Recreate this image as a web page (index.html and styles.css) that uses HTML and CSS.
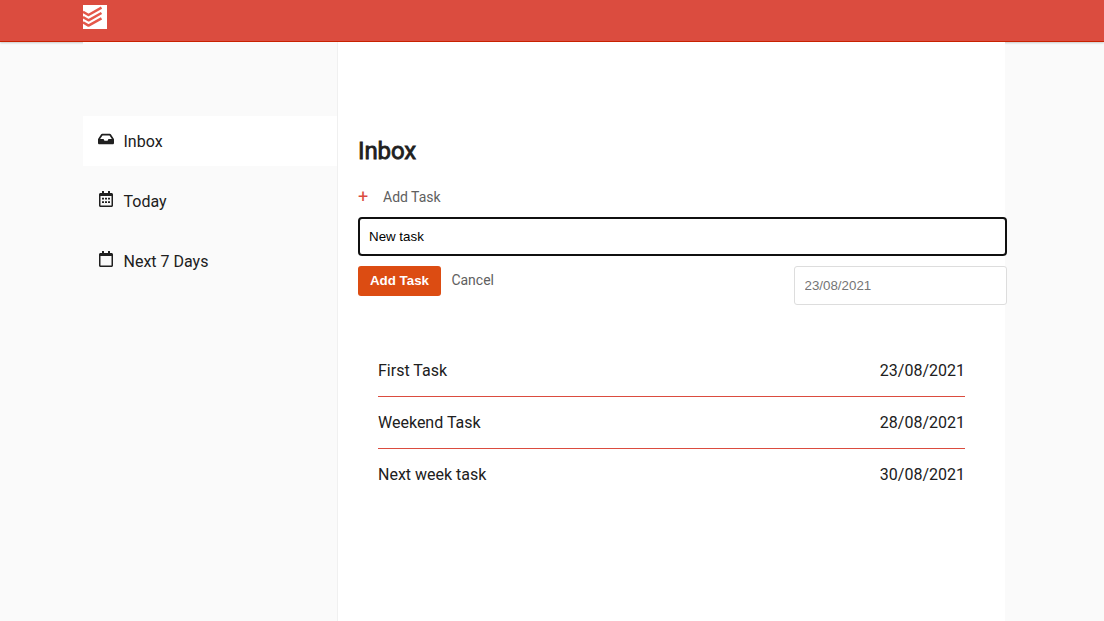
FILE: index.html
```html
<!DOCTYPE html>
<html lang="en">
<head>
<meta charset="utf-8">
<title>Inbox</title>
<link rel="stylesheet" href="styles.css">
</head>
<body>
<header class="header">
  <svg class="logo" viewBox="0 0 24 24" role="img" aria-label="Logo">
    <rect width="24" height="24" fill="#fff"/>
    <g fill="none" stroke="#e4584a" stroke-width="2.5" stroke-linejoin="round">
      <path d="M0 6.700 5.500 10 18.500 2.700"/>
      <path d="M0 12 5.500 15.300 18.500 8"/>
      <path d="M0 17.300 5.500 20.600 18.500 13.300"/>
    </g>
  </svg>
</header>
<div class="layout">
  <nav class="sidebar">
    <a class="nav-item active">
      <svg class="icon" viewBox="0 0 576 512"><path d="M567.938 243.908L462.25 85.374A48.003 48.003 0 0 0 422.311 64H153.689a48 48 0 0 0-39.938 21.374L8.062 243.908A47.994 47.994 0 0 0 0 270.533V400c0 26.510 21.490 48 48 48h480c26.510 0 48-21.490 48-48V270.533a47.994 47.994 0 0 0-8.062-26.625zM162.252 128h251.497l85.333 128H376l-32 64H232l-32-64H76.918l85.334-128z"/></svg>
      <span class="nav-label">Inbox</span>
    </a>
    <a class="nav-item">
      <svg class="icon" viewBox="0 0 448 512"><path d="M400 64h-48V12c0-6.600-5.400-12-12-12h-40c-6.600 0-12 5.400-12 12v52H160V12c0-6.600-5.400-12-12-12h-40c-6.600 0-12 5.400-12 12v52H48C21.500 64 0 85.500 0 112v352c0 26.500 21.500 48 48 48h352c26.500 0 48-21.500 48-48V112c0-26.500-21.500-48-48-48zm-6 400H54c-3.300 0-6-2.700-6-6V160h352v298c0 3.300-2.700 6-6 6z"/><path d="M96 212h64v56H96zm96 0h64v56h-64zm96 0h64v56h-64zM96 324h64v56H96zm96 0h64v56h-64zm96 0h64v56h-64z"/></svg>
      <span class="nav-label">Today</span>
    </a>
    <a class="nav-item">
      <svg class="icon" viewBox="0 0 448 512"><path d="M400 64h-48V12c0-6.600-5.400-12-12-12h-40c-6.600 0-12 5.400-12 12v52H160V12c0-6.600-5.400-12-12-12h-40c-6.600 0-12 5.400-12 12v52H48C21.500 64 0 85.500 0 112v352c0 26.500 21.500 48 48 48h352c26.500 0 48-21.500 48-48V112c0-26.500-21.500-48-48-48zm-6 400H54c-3.300 0-6-2.700-6-6V160h352v298c0 3.300-2.700 6-6 6z"/></svg>
      <span class="nav-label">Next 7 Days</span>
    </a>
  </nav>
  <main class="content">
    <h1 class="title">Inbox</h1>
    <div class="add-link"><span class="plus">+</span><span>Add Task</span></div>
    <input class="task-input" type="text" value="New task" aria-label="Task">
    <div class="actions">
      <button class="submit" type="button">Add Task</button>
      <span class="cancel">Cancel</span>
      <input class="date-input" type="text" placeholder="23/08/2021" aria-label="Date">
    </div>
    <ul class="tasks">
      <li class="task"><span>First Task</span><span>23/08/2021</span></li>
      <li class="task"><span>Weekend Task</span><span>28/08/2021</span></li>
      <li class="task"><span>Next week task</span><span>30/08/2021</span></li>
    </ul>
  </main>
</div>
</body>
</html>
```

FILE: styles.css
```css
* { box-sizing: border-box; }
body {
  margin: 0;
  height: 100vh;
  overflow: hidden;
  background: #fafafa;
  color: #202020;
  font: 16px/20px Roboto, sans-serif;
}
.header {
  height: 42px;
  padding: 5px 83px;
  background: #db4c3f;
  border-bottom: 1px solid #c82100;
  box-shadow: 0 1px 2px rgba(0, 0, 0, .2);
}
.logo { display: block; width: 24px; height: 24px; }
.layout {
  position: relative;
  display: flex;
  width: 922px;
  height: 579px;
  margin-left: 83px;
}
.sidebar {
  width: 255px;
  padding-top: 74px;
  background: #fafafa;
  border-right: 1px solid #f0f0f0;
}
.nav-item {
  display: flex;
  align-items: center;
  gap: 9.5px;
  height: 50px;
  margin-bottom: 10px;
  padding-left: 15px;
}
.nav-label { padding-top: 2px; }
.active { background: #fff; }
.icon { width: 16px; height: 16px; margin-top: -4px; fill: #202020; }
.content {
  width: 667px;
  padding: 95px 0 0 20px;
  background: #fff;
}
.title {
  margin: 0;
  font-size: 24px;
  font-weight: 400;
  line-height: 28px;
  letter-spacing: -.1px;
  -webkit-text-stroke: .8px #202020;
}
.add-link {
  display: flex;
  gap: 15px;
  height: 20px;
  margin-top: 22px;
  color: #606060;
  font-size: 14px;
  line-height: 20px;
}
.plus { width: 10px; color: #db4c3f; font-size: 18px; line-height: 19px; }
.task-input {
  display: block;
  width: 649px;
  height: 39px;
  margin-top: 10px;
  padding: 0 9px;
  border: 2px solid #101010;
  border-radius: 4px;
  outline: none;
  background: #fff;
  color: #000;
  font: 13.333px "Liberation Sans", Arial, sans-serif;
}
.actions {
  display: flex;
  align-items: flex-start;
  width: 649px;
  margin-top: 10px;
}
.submit {
  width: 83px;
  height: 30px;
  padding: 0 0 2px;
  border: 0;
  border-radius: 3px;
  background: #dc4c12;
  color: #fff;
  font: bold 13.333px "Liberation Sans", Arial, sans-serif;
}
.cancel { margin: 4px 0 0 10.4px; color: #606060; font-size: 14px; }
.date-input {
  width: 213px;
  height: 39px;
  margin-left: auto;
  padding: 0 9.500px;
  border: 1px solid #ddd;
  border-radius: 3px;
  background: #fff;
  font: 13.333px "Liberation Sans", Arial, sans-serif;
}
.date-input::placeholder { color: #757575; }
.tasks { width: 587px; margin: 40px 0 0 20px; padding: 0; list-style: none; }
.task {
  display: flex;
  justify-content: space-between;
  height: 52px;
  padding: 16px 0 0;
  border-bottom: 1px solid #db4c3f;
}
.task:last-child { border-bottom: 0; }
```
